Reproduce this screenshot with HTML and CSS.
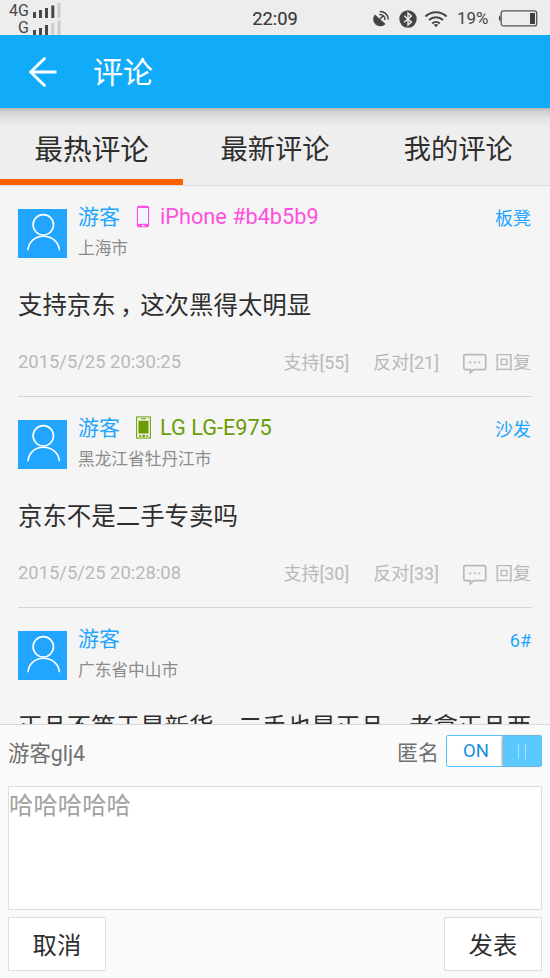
FILE: index.html
```
<!DOCTYPE html>
<html lang="zh-CN">
<head>
<meta charset="utf-8">
<title>评论</title>
<link rel="stylesheet" href="styles.css">
</head>
<body>
<svg class="defs" width="0" height="0">
  <symbol id="user" viewBox="0 0 49 49"><g fill="none" stroke="#fff" stroke-width="1.6"><circle cx="25.3" cy="15.8" r="10.2"/><path d="M10 41.3C10.5 33 17 27.3 25.4 27.3S40.9 33 41.4 41.3"/></g></symbol>
  <symbol id="reply" viewBox="0 0 26 22"><path d="M3.5 1.6H22a1.700 1.700 0 0 1 1.700 1.700V15a1.700 1.700 0 0 1-1.700 1.700H11.500L8.400 19.800V16.700H3.500A1.700 1.700 0 0 1 1.800 15V3.300a1.700 1.700 0 0 1 1.700-1.700Z" fill="none" stroke="#b9b9b9" stroke-width="1.700"/><path d="M7.200 8.400h2v1.800h-2zM11.800 8.400h2v1.800h-2zM16.400 8.400h2v1.800h-2z" fill="#b9b9b9"/></symbol>
</svg>
<div class="app">
  <div class="status">
    <div class="sims">
      <div class="sim"><span>4G</span><svg width="28" height="16" viewBox="0 0 28 16"><path fill="#484848" d="M0 10h3v6H0zM6 8h3v8H6zM12 6h3v10h-3zM18.300 3.500h3V16h-3z"/><path fill="#cbcbcb" d="M24.500 1h3v15h-3z"/></svg></div>
      <div class="sim"><span>G</span><svg width="28" height="16" viewBox="0 0 28 16"><path fill="#484848" d="M0 11h3v5H0zM6 9h3v7H6zM12 6h3v10h-3z"/><path fill="#cbcbcb" d="M18.300 4h3v12h-3zM24.500 1.500h3V16h-3z"/></svg></div>
    </div>
    <time class="clock">22:09</time>
    <div class="indicators">
      <svg class="gps" width="17" height="17" viewBox="0 0 17 17"><path d="M2 4.500 12.500 14A7 7 0 1 1 2 4.500Z" fill="#454545"/><path d="m7 9 2.700-2.700M6.200 4.600a5 5 0 0 1 5.800 5.400M6.800 1.400a8.200 8.200 0 0 1 8.500 8.100" fill="none" stroke="#454545" stroke-width="1.500"/></svg>
      <svg class="bt" width="18" height="18" viewBox="0 0 18 18"><circle cx="9" cy="9" r="8.700" fill="#454545"/><path d="m5.200 5.800 7.200 6.300L9 15V3l3.400 2.900-7.200 6.300" fill="none" stroke="#ededed" stroke-width="1.400"/></svg>
      <svg class="wifi" width="24" height="18" viewBox="0 0 24 18"><g fill="none" stroke="#454545" stroke-width="2"><path d="M1.400 6.500a15.300 15.300 0 0 1 21.200 0M5 10.100a10.200 10.200 0 0 1 14 0M8.300 13.400a5.600 5.600 0 0 1 7.400 0"/></g><path d="M9.800 14.800q2.200-1.600 4.400 0L12 17.300Z" fill="#454545"/></svg>
      <span class="percent">19%</span>
      <svg class="battery" width="40" height="17" viewBox="0 0 40 17"><rect x="3.200" y=".9" width="35.500" height="15" rx="2.200" fill="none" stroke="#555" stroke-width="1.300"/><path d="M2.300 5.300C.4 5.300.4 11.300 2.300 11.300ZM32 3h5v11h-5z" fill="#3f3f3f"/></svg>
    </div>
  </div>

  <header class="bar">
    <svg width="30" height="32" viewBox="0 0 30 32"><path d="M17.300 1.700 2.700 16 17.300 30.300M2.700 16H28.500" fill="none" stroke="#fff" stroke-width="2.900"/></svg>
    <h1>评论</h1>
  </header>

  <nav class="tabs">
    <a class="tab active">最热评论</a>
    <a class="tab">最新评论</a>
    <a class="tab">我的评论</a>
  </nav>

  <main class="list">
    <article class="item">
      <div class="head">
        <svg class="avatar"><use href="#user"/></svg>
        <div class="who">
          <div class="name"><span>游客</span><svg class="phone" width="15" height="23" viewBox="0 0 15 23"><rect x=".9" y=".8" width="12.200" height="21.400" rx="1.800" fill="#ff4fe0"/><path d="M2 3h10v15.800H2z" fill="#f1f5ff"/><path d="M6 20h2.500v1.300H6z" fill="#fff"/></svg><span class="device pink">iPhone #b4b5b9</span></div>
          <div class="place">上海市</div>
        </div>
        <span class="floor">板凳</span>
      </div>
      <p class="text">支持京东<span class="comma">，</span>这次黑得太明显</p>
      <div class="meta"><time>2015/5/25 20:30:25</time><span class="up">支持[55]</span><span class="down">反对[21]</span><svg class="bubble"><use href="#reply"/></svg><span>回复</span></div>
    </article>
    <article class="item">
      <div class="head">
        <svg class="avatar"><use href="#user"/></svg>
        <div class="who">
          <div class="name"><span>游客</span><svg class="phone" width="15" height="23" viewBox="0 0 15 23"><rect x=".6" y=".9" width="13.800" height="21.200" fill="#eef3df" stroke="#6fa00c" stroke-width="1"/><path d="M2.500 4.800h10v12.700h-10zM5.200 2.200h4.600v1H5.200zM3 19.200h2.200v1.500H3zM6.500 18.800h2.400v2.200H6.500zM10.200 19.200h2v1.500h-2z" fill="#689b08"/></svg><span class="device green">LG LG-E975</span></div>
          <div class="place">黑龙江省牡丹江市</div>
        </div>
        <span class="floor">沙发</span>
      </div>
      <p class="text">京东不是二手专卖吗</p>
      <div class="meta"><time>2015/5/25 20:28:08</time><span class="up">支持[30]</span><span class="down">反对[33]</span><svg class="bubble"><use href="#reply"/></svg><span>回复</span></div>
    </article>
    <article class="item">
      <div class="head">
        <svg class="avatar"><use href="#user"/></svg>
        <div class="who">
          <div class="name"><span>游客</span></div>
          <div class="place">广东省中山市</div>
        </div>
        <span class="floor">6#</span>
      </div>
      <p class="text">正品不等于是新货<span class="comma">，</span>二手也是正品<span class="comma">，</span>老拿正品两</p>
    </article>
  </main>

  <section class="composer">
    <div class="identity">
      <span class="nick">游客glj4</span>
      <span class="anon">匿名</span>
      <div class="switch"><span class="on">ON</span><span class="knob"><i></i><i></i></span></div>
    </div>
    <div class="field">哈哈哈哈哈</div>
    <div class="actions"><button>取消</button><button>发表</button></div>
  </section>
</div>
</body>
</html>
```
FILE: styles.css
```
* { box-sizing: border-box; }
body {
  margin: 0;
  font-family: Roboto, "Noto Sans CJK SC", sans-serif;
  color: #2e2e2e;
}
h1, p { margin: 0; font-weight: 400; }
svg { display: block; flex: none; }
.defs { display: none; }

.app {
  height: 978px;
  width: 550px;
  display: grid;
  grid-template-rows: 35px 73px 78px 538px 254px;
  overflow: hidden;
  background: #f5f5f5;
  white-space: nowrap;
}

.status {
  display: grid;
  grid-template-columns: 1fr auto 1fr;
  background: #ededed;
  color: #484848;
}
.sims { padding-top: 1px; }
.sim { display: flex; height: 17px; align-items: center; }
.sim span { width: 29px; margin-right: 4px; text-align: right; font-size: 16px; line-height: 16px; padding-top: 2px; }
.clock { font-size: 18.3px; line-height: 37px; color: #3c3c3c; -webkit-text-stroke: .2px #3c3c3c; }
.indicators { display: flex; align-items: center; justify-content: flex-end; padding-right: 12px; }
.bt { margin-left: 9px; }
.wifi { margin-left: 7px; }
.percent { margin-left: 9px; width: 33px; font-size: 17px; line-height: 35px; }
.battery { margin-left: 8px; }

.bar {
  display: flex;
  align-items: center;
  padding-left: 28px;
  background: #10acfa;
  color: #fff;
}
.bar h1 { margin-left: 35px; padding-top: 2px; font-size: 30px; line-height: 44px; }

.tabs {
  display: grid;
  grid-template-columns: repeat(3, 1fr);
  background: linear-gradient(#b5b5b5, #cecece 3px, #e2e2e2 10px, #eee 20px);
  border-bottom: 1px solid #dedede;
}
.tab {
  text-align: center;
  font-size: 27.3px;
  line-height: 84px;
  height: 77px;
}
.tab.active { font-size: 28.7px; border-bottom: 6px solid #ff6100; }

.list { overflow: hidden; padding: 0 18px; }
.item { height: 211px; padding-top: 23px; border-bottom: 1px solid #d5d5d5; }
.head { display: flex; height: 49px; }
.avatar { width: 49px; height: 49px; background: #22a5ff; }
.who { flex: 1; margin: -7px 0 0 11px; }
.name { display: flex; align-items: center; height: 30px; font-size: 21px; line-height: 30px; padding-bottom: 1px; color: #22a5ff; }
.phone { margin-left: 16px; }
.device { margin-left: 9px; padding-top: 1px; font-size: 21.7px; }
.pink { color: #ff50e0; }
.green { color: #6c9c08; }
.place { font-size: 16.7px; line-height: 34px; color: #8b8b8b; }
.floor { margin-right: 1px; font-size: 18px; line-height: 20px; color: #22a5ff; }
.text { margin-top: 29px; font-size: 24.45px; line-height: 37px; }
.comma { font-feature-settings: "halt"; padding: 0 .33em 0 .17em; }
.meta { display: flex; align-items: center; margin: 24px 1px 0 0; height: 26px; font-size: 18px; color: #b9b9b9; }
.meta time { font-size: 18.4px; }
.up { margin-left: auto; }
.down { margin-left: 24px; }
.bubble { width: 26px; height: 22px; margin: 5px 7px 0 23px; }

.composer {
  border-top: 1px solid #d9d9d9;
  background: #fafafa;
  padding: 0 8px;
}
.identity { display: flex; align-items: center; height: 61px; padding-bottom: 9px; color: #717171; }
.nick, .anon { font-size: 21px; }
.nick { font-size: 21.4px; }
.anon { margin-left: auto; margin-right: 7px; }
.switch {
  display: flex;
  width: 96px;
  height: 32px;
  border: 1px solid #53c4ff;
  border-radius: 2px;
  background: #fff;
}
.on { flex: 1; text-align: center; padding-left: 2px; font-size: 18.5px; line-height: 30px; color: #168ddb; }
.knob { width: 38px; display: flex; gap: 6px; align-items: center; justify-content: center; background: #5bc8ff; box-shadow: -1px 0 2px #999; }
.knob i { width: 1px; height: 15px; background: #a9e3ff; }
.field { height: 124px; border: 1px solid #dedede; background: #fff; padding: 1px 0 0; font-size: 24.4px; line-height: 35px; color: #a3a3a3; }
.actions { display: flex; justify-content: space-between; margin-top: 7px; }
.actions button {
  width: 98px;
  height: 54px;
  padding: 0 0 1px;
  border: 1px solid #dedede;
  background: #fff;
  font: inherit;
  font-size: 24.4px;
  color: #2e2e2e;
}
```
